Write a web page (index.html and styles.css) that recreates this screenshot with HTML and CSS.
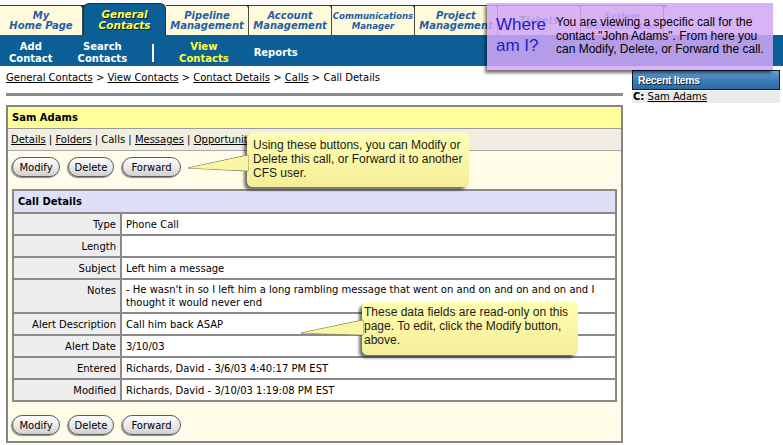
FILE: index.html
```html
<!DOCTYPE html>
<html>
<head>
<meta charset="utf-8">
<title>Call Details</title>
<link rel="stylesheet" href="styles.css">
</head>
<body>
<div class="page">
  <header class="top">
    <nav class="tabs">
      <div class="tab">My<br>Home Page</div>
      <div class="tab active">General<br>Contacts</div>
      <div class="tab">Pipeline<br>Management</div>
      <div class="tab">Account<br>Management</div>
      <div class="tab tab-small">Communications<br>Manager</div>
      <div class="tab">Project<br>Management</div>
      <div class="tab">Tickets</div>
      <div class="tab tab-small">System<br>Administration</div>
    </nav>
    <nav class="subnav">
      <div class="sub">Add<br>Contact</div>
      <div class="sub">Search<br>Contacts</div>
      <div class="sep"></div>
      <div class="sub cur">View<br>Contacts</div>
      <div class="sub">Reports</div>
    </nav>
  </header>

  <div class="main">
    <div class="content">
      <div class="crumbs"><a>General Contacts</a> &gt; <a>View Contacts</a> &gt; <a>Contact Details</a> &gt; <a>Calls</a> &gt; Call Details</div>
      <div class="rule"></div>
      <div class="box">
        <div class="box-title">Sam Adams</div>
        <div class="box-tabs"><a>Details</a> | <a>Folders</a> | Calls | <a>Messages</a> | <a>Opportunities</a></div>
        <div class="box-body">
          <div class="btns">
            <button class="btn btn-modify">Modify</button>
            <button class="btn btn-delete">Delete</button>
            <button class="btn btn-forward">Forward</button>
          </div>
          <table class="details">
            <tr><th colspan="2">Call Details</th></tr>
            <tr><td class="lbl">Type</td><td class="val">Phone Call</td></tr>
            <tr><td class="lbl">Length</td><td class="val"></td></tr>
            <tr><td class="lbl">Subject</td><td class="val">Left him a message</td></tr>
            <tr class="tall"><td class="lbl top">Notes</td><td class="val">- He wasn't in so I left him a long rambling message that went on and on and on and on and I thought it would never end</td></tr>
            <tr><td class="lbl">Alert Description</td><td class="val">Call him back ASAP</td></tr>
            <tr><td class="lbl">Alert Date</td><td class="val">3/10/03</td></tr>
            <tr><td class="lbl">Entered</td><td class="val">Richards, David - 3/6/03 4:40:17 PM EST</td></tr>
            <tr><td class="lbl">Modified</td><td class="val">Richards, David - 3/10/03 1:19:08 PM EST</td></tr>
          </table>
          <div class="btns btns-bottom">
            <button class="btn btn-modify">Modify</button>
            <button class="btn btn-delete">Delete</button>
            <button class="btn btn-forward">Forward</button>
          </div>
        </div>
      </div>
    </div>
    <aside class="side">
      <div class="recent-head">Recent Items</div>
      <div class="recent-item"><b>C:</b> <a>Sam Adams</a></div>
    </aside>
  </div>

  <div class="callout callout-buttons">
    <svg class="pointer" width="62" height="40" viewBox="0 0 62 40">
      <polygon points="61,22 1,35 61,38" fill="#fbf6a4" stroke="#8f8c6a" stroke-width="1"/>
      <polygon points="61,22.5 2,35 61,37.5" fill="#fbf6a4"/>
    </svg>
    <div class="callout-text">Using these buttons, you can Modify or<br>Delete this call, or Forward it to another<br>CFS user.</div>
  </div>

  <div class="callout callout-fields">
    <svg class="pointer" width="64" height="40" viewBox="0 0 64 40">
      <polygon points="63,18 1,31 63,33" fill="#fbf6a4" stroke="#8f8c6a" stroke-width="1"/>
      <polygon points="63,18.5 2,31 63,32.5" fill="#fbf6a4"/>
    </svg>
    <div class="callout-text">These data fields are read-only on this<br>page. To edit, click the Modify button,<br>above.</div>
  </div>

  <div class="where">
    <div class="where-title">Where<br>am I?</div>
    <div class="where-text">You are viewing a specific call for the<br>contact "John Adams". From here you<br>can Modify, Delete, or Forward the call.</div>
  </div>
</div>
</body>
</html>
```

FILE: styles.css
```css
html, body {
  margin: 0;
  padding: 0;
  background: #ffffff;
}
body {
  font-family: "DejaVu Sans", Verdana, sans-serif;
  font-size: 10px;
  color: #000;
}
a {
  color: #000;
  text-decoration: underline;
}
.page {
  position: relative;
  width: 783px;
  height: 445px;
  overflow: hidden;
}

/* top tabs */
.tabs {
  display: flex;
  align-items: flex-end;
  height: 35px;
}
.tab {
  position: relative;
  box-sizing: border-box;
  width: 83px;
  height: 30px;
  background: #fffadc;
  border-top: 1px solid #3a3a3a;
  border-right: 1px solid #4a4a4a;
  display: flex;
  align-items: center;
  justify-content: center;
  text-align: center;
  font-weight: bold;
  font-style: italic;
  font-size: 10px;
  line-height: 10px;
  color: #1e5fa4;
  padding-top: 1px;
}
.tab::before {
  content: "";
  position: absolute;
  top: -1px;
  right: -4px;
  border-left: 3px solid transparent;
  border-right: 3px solid transparent;
  border-top: 4px solid #333;
}
.tab.active {
  height: 32px;
  background: #0c5f96;
  color: #ffff5a;
  text-shadow: 1px 1px 0 #0a1a2a;
  border: 1px solid #23303a;
  border-bottom: none;
  border-radius: 6px 6px 0 0;
  font-size: 10.5px;
  line-height: 11px;
}
.tab.active::before { display: none; }
.tab-small {
  font-size: 8.6px;
  line-height: 10px;
}

/* sub navigation */
.subnav {
  display: flex;
  align-items: center;
  gap: 25px;
  height: 31px;
  padding-left: 9px;
  padding-top: 4px;
  box-sizing: border-box;
  background: #0c5f96;
}
.sub {
  color: #ffffff;
  font-weight: bold;
  font-size: 10px;
  line-height: 12px;
  text-align: center;
}
.sub.cur { color: #ffff33; }
.sep {
  width: 2px;
  height: 18px;
  background: #ffffff;
}

/* main area */
.main {
  display: flex;
  align-items: flex-start;
}
.content {
  width: 617px;
  margin-left: 6px;
}
.crumbs {
  padding-top: 6px;
  line-height: 12px;
  white-space: nowrap;
}
.rule {
  margin-top: 9px;
  height: 3px;
  background: #8c8c8c;
}
.box {
  margin-top: 9px;
  border: 2px solid #858585;
  background: #fffdea;
}
.box-title {
  height: 21px;
  line-height: 21px;
  padding-left: 4px;
  font-weight: bold;
  background: #ffff9c;
  border-bottom: 1px solid #9a9a9a;
}
.box-tabs {
  height: 21px;
  line-height: 21px;
  padding-left: 3px;
  background: #efeee1;
  border-bottom: 1px solid #aaaaaa;
}
.box-body {
  padding: 6px 4px 6px 4px;
}
.btns {
  display: flex;
  gap: 8px;
  margin-bottom: 12px;
}
.btns-bottom {
  margin-top: 13px;
  margin-bottom: 0;
}
.btn {
  height: 20px;
  padding: 0;
  font-family: "DejaVu Sans", Verdana, sans-serif;
  font-size: 10px;
  color: #000;
  border: 1px solid #5a5a5a;
  border-radius: 10px;
  background: linear-gradient(#ffffff, #e6e6e6 60%, #cfcfcf);
  box-shadow: -1px 1px 1px #8a8a8a;
}
.btn-modify { width: 48px; }
.btn-delete { width: 46px; }
.btn-forward { width: 59px; }

.details {
  width: 100%;
  border-collapse: collapse;
  border: 2px solid #8a8a8a;
  background: #fff;
}
.details th {
  text-align: left;
  height: 21px;
  padding: 0 0 0 4px;
  background: #dfe0f8;
  border: 2px solid #8a8a8a;
  font-weight: bold;
}
.details td {
  height: 20px;
  border: 2px solid #8a8a8a;
  padding: 0 4px;
  line-height: 13px;
}
.details td.lbl {
  width: 98px;
  background: #eeeeee;
  text-align: right;
  white-space: nowrap;
}
.details td.top { vertical-align: top; padding-top: 4px; }
.details tr.tall td.val { padding-top: 3px; padding-bottom: 3px; }

/* side */
.side {
  width: 148px;
  margin-left: 9px;
  margin-top: 4px;
}
.recent-head {
  box-sizing: border-box;
  height: 20px;
  line-height: 19px;
  padding-left: 5px;
  border: 1px solid #0e1e34;
  background: linear-gradient(#5f9fd4, #3b7cb4 55%, #2e6aa2);
  color: #fff;
  font-family: "Liberation Sans", Arial, sans-serif;
  font-weight: bold;
  font-size: 10.5px;
  letter-spacing: -0.3px;
  text-shadow: 1px 1px 0 #0a1c33;
}
.recent-item {
  margin-top: 1px;
  height: 12px;
  line-height: 12px;
  padding-left: 1px;
  background: #ebebeb;
}

/* callouts */
.callout {
  position: absolute;
  box-sizing: border-box;
  font-family: "Liberation Sans", Arial, sans-serif;
  font-size: 12px;
  line-height: 14px;
  color: #1a1a1a;
  background: linear-gradient(#ffffb2, #fbf6a4 50%, #f4ee98);
  border-radius: 6px;
  box-shadow: -3px 3px 3px rgba(0,0,0,0.55);
}
.callout .pointer {
  position: absolute;
  top: 0;
}
.callout-buttons {
  left: 247px;
  top: 133px;
  width: 222px;
  height: 54px;
  padding: 5px 6px;
}
.callout-buttons .pointer { left: -60px; }
.callout-fields {
  left: 362px;
  top: 302px;
  width: 216px;
  height: 53px;
  padding: 3px 2px;
}
.callout-fields .pointer { left: -62px; }
.callout-text { position: relative; }

/* where am I */
.where {
  position: absolute;
  left: 487px;
  top: 3px;
  width: 286px;
  height: 67px;
  box-sizing: border-box;
  display: flex;
  padding: 11px 0 0 9px;
  background: rgba(209,167,247,0.86);
  box-shadow: -2px 3px 3px rgba(0,0,0,0.55);
  font-family: "Liberation Sans", Arial, sans-serif;
}
.where-title {
  width: 60px;
  font-size: 17px;
  line-height: 21px;
  color: #2020c8;
}
.where-text {
  padding-top: 2px;
  font-size: 12px;
  line-height: 13.5px;
  color: #000;
}
```
